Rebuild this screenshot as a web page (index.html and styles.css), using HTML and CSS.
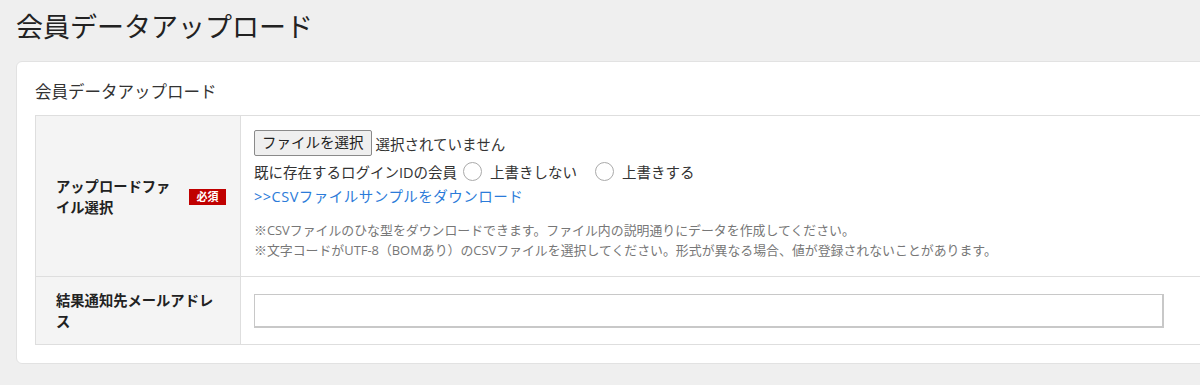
FILE: index.html
```html
<!DOCTYPE html>
<html lang="ja">
  <head>
    <meta charset="UTF-8" />
    <meta name="viewport" content="width=device-width, initial-scale=1.0" />
    <title>会員データアップロード</title>
    <link rel="stylesheet" href="styles.css">
  </head>
  <body>
    <div class="page">
      <h1 class="page-title">会員データアップロード</h1>

      <div class="card">
        <h2 class="card-title">会員データアップロード</h2>

        <table class="form-table">
          <tr>
            <th>
              <div class="label-wrap">
                <span class="label-text narrow">アップロードファイル選択</span>
                <span class="badge">必須</span>
              </div>
            </th>
            <td class="upload-cell">
              <div class="file-row">
                <button type="button" class="file-btn">ファイルを選択</button>
                <span class="file-name">選択されていません</span>
              </div>
              <div class="radio-row">
                <span>既に存在するログインIDの会員</span>
                <label class="radio-item"><input type="radio" name="overwrite" /> 上書きしない</label>
                <label class="radio-item"><input type="radio" name="overwrite" /> 上書きする</label>
              </div>
              <div class="link-row">
                <a href="#" class="sample-link">&gt;&gt;CSVファイルサンプルをダウンロード</a>
              </div>
              <div class="notes">
                <p>※CSVファイルのひな型をダウンロードできます。ファイル内の説明通りにデータを作成してください。</p>
                <p>※文字コードがUTF-8（BOMあり）のCSVファイルを選択してください。形式が異なる場合、値が登録されないことがあります。</p>
              </div>
            </td>
          </tr>
          <tr>
            <th>
              <span class="label-text">結果通知先メールアドレス</span>
            </th>
            <td class="mail-cell">
              <input type="text" class="mail-input" />
            </td>
          </tr>
        </table>
      </div>
    </div>
  </body>
</html>
```

FILE: styles.css
```css
html,
body {
  margin: 0;
  padding: 0;
  background: #efefef;
  overflow: hidden;
}

body {
  font-family: "Open Sans", "Noto Sans CJK JP", sans-serif;
  color: #333;
}

.page {
  padding: 0 0 0 16px;
}

.page-title {
  margin: 0;
  padding-top: 9px;
  font-size: 27px;
  font-weight: normal;
  line-height: 36px;
  color: #222;
}

.card {
  margin-top: 16px;
  width: 1230px;
  background: #fff;
  border: 1px solid #e2e2e2;
  border-radius: 6px;
  padding: 18px 0 18px 18px;
}

.card-title {
  margin: 0 0 11px;
  font-size: 16.5px;
  font-weight: normal;
  line-height: 24px;
  color: #333;
}

.form-table {
  width: 100%;
  border-collapse: collapse;
}

.form-table th,
.form-table td {
  border: 1px solid #dedede;
}

.form-table th {
  width: 164px;
  padding: 0 20px;
  background: #f4f4f4;
  text-align: left;
  vertical-align: middle;
  font-size: 14.3px;
  font-weight: bold;
  line-height: 21px;
  color: #222;
}

.label-wrap {
  display: flex;
  align-items: center;
  justify-content: space-between;
  padding-top: 2px;
}

.label-text.narrow {
  width: 122px;
}

.badge {
  display: inline-block;
  width: 37px;
  height: 16px;
  margin-right: -6px;
  background: #c00000;
  color: #fff;
  font-size: 11px;
  line-height: 16px;
  text-align: center;
}

.form-table td {
  padding: 0 13px;
  font-size: 14.5px;
  color: #333;
}

.upload-cell {
  padding-top: 14px !important;
  padding-bottom: 16px !important;
}

.file-row {
  display: flex;
  align-items: center;
  height: 26px;
}

.file-btn {
  height: 26px;
  padding: 0 7px;
  margin-right: 4px;
  background: #efefef;
  border: 1px solid #8a8a8a;
  border-radius: 2px;
  font-family: inherit;
  font-size: 14.5px;
  color: #222;
  line-height: 22px;
}

.radio-row {
  display: flex;
  align-items: center;
  height: 26px;
  margin-top: 2px;
}

.radio-item {
  display: flex;
  align-items: center;
  margin-left: 6px;
  margin-right: 12px;
}

.radio-item input {
  appearance: none;
  width: 19px;
  height: 19px;
  margin: 0 8px 0 0;
  border: 1.5px solid #aaa;
  border-radius: 50%;
  background: #fff;
}

.link-row {
  height: 26px;
  line-height: 26px;
}

.sample-link {
  color: #2b7bd9;
  text-decoration: none;
  letter-spacing: 0.5px;
}

.notes {
  margin-top: 10px;
  font-size: 12.9px;
  line-height: 20px;
  color: #777;
}

.notes p {
  margin: 0;
}

.mail-cell {
  height: 67px;
}

.mail-input {
  display: block;
  width: 910px;
  height: 34px;
  box-sizing: border-box;
  border: 1px solid #c8c8c8;
  border-right-width: 2px;
  border-bottom-width: 2px;
  background: #fff;
  margin: 0;
}
```
